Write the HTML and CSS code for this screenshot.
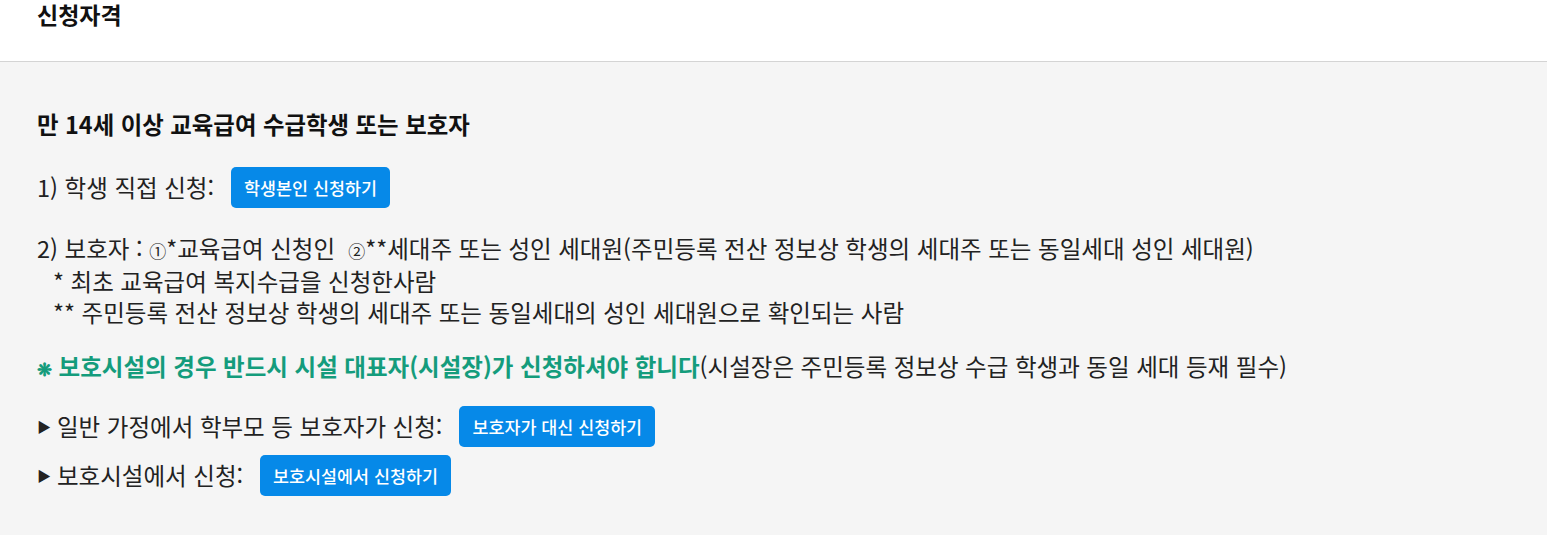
FILE: index.html
```
<!DOCTYPE html>
<html lang="ko">
<head>
<meta charset="utf-8">
<link rel="stylesheet" href="styles.css">
</head>
<body>
<header class="top">
  <h1 class="title">신청자격</h1>
</header>
<main class="panel">
  <h2 class="heading">만 14세 이상 교육급여 수급학생 또는 보호자</h2>
  <div class="row">
    <span class="label">1) 학생 직접 신청:</span>
    <a class="btn">학생본인 신청하기</a>
  </div>
  <div class="block">
    <p class="line">2) 보호자 : <span class="circ">①</span>*교육급여 신청인&nbsp; <span class="circ">②</span>**세대주 또는 성인 세대원(주민등록 전산 정보상 학생의 세대주 또는 동일세대 성인 세대원)</p>
    <p class="line note">* 최초 교육급여 복지수급을 신청한사람</p>
    <p class="line note">** 주민등록 전산 정보상 학생의 세대주 또는 동일세대의 성인 세대원으로 확인되는 사람</p>
  </div>
  <p class="line warn"><strong class="green"><span class="mark">❋</span> 보호시설의 경우 반드시 시설 대표자(시설장)가 신청하셔야 합니다</strong>(시설장은 주민등록 정보상 수급 학생과 동일 세대 등재 필수)</p>
  <div class="row row2">
    <span class="label"><span class="tri">▶</span>일반 가정에서 학부모 등 보호자가 신청:</span>
    <a class="btn">보호자가 대신 신청하기</a>
  </div>
  <div class="row row3">
    <span class="label"><span class="tri">▶</span>보호시설에서 신청:</span>
    <a class="btn">보호시설에서 신청하기</a>
  </div>
</main>
</body>
</html>
```
FILE: styles.css
```
html, body {
  margin: 0;
  padding: 0;
  background: #f5f5f5;
  font-family: "Noto Sans CJK KR", "Noto Sans", sans-serif;
  color: #222;
}
.top {
  background: #fff;
  height: 61px;
  border-bottom: 1px solid #d4d4d4;
  padding-left: 37px;
  box-sizing: content-box;
}
.title {
  margin: 0;
  font-size: 23px;
  line-height: 28px;
  font-weight: 700;
  color: #111;
}
.panel {
  padding: 47px 37px 30px;
}
.heading {
  margin: 0 0 28px;
  font-size: 23.4px;
  line-height: 30px;
  font-weight: 700;
  color: #111;
}
.row {
  display: flex;
  align-items: center;
  gap: 17px;
  font-size: 23.5px;
  line-height: 31px;
}
.label {
  display: flex;
  align-items: center;
}
.btn {
  display: inline-flex;
  align-items: center;
  height: 41px;
  padding: 0 13px;
  background: #0689e8;
  color: #fff;
  font-size: 17.4px;
  font-weight: 500;
  border-radius: 5px;
  box-sizing: border-box;
}
.block {
  margin-top: 25px;
}
.line {
  margin: 0;
  font-size: 23.5px;
  line-height: 31px;
}
.note {
  padding-left: 16px;
}
.circ {
  font-size: 17px;
}
.warn {
  margin-top: 23px;
}
.green {
  color: #149c7c;
  font-weight: 700;
}
.mark {
  font-size: 18px;
}
.row2 {
  margin-top: 22px;
}
.row3 {
  margin-top: 8px;
}
.tri {
  font-size: 14px;
  margin-right: 6px;
}
```
